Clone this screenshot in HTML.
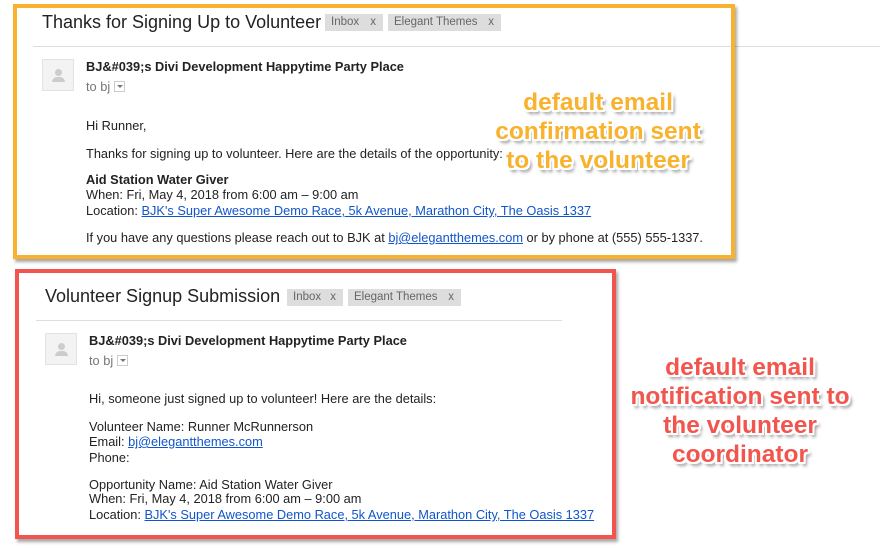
<!DOCTYPE html>
<html><head><meta charset="utf-8"><style>
*{margin:0;padding:0;box-sizing:border-box}
body{width:880px;height:548px;background:#fff;position:relative;overflow:hidden;font-family:"Liberation Sans",Arial,sans-serif;color:#222}
.a{position:absolute;white-space:nowrap;font-size:12.8px;line-height:16px}
.box{position:absolute}
.t{position:absolute;font-size:18px;line-height:22px;color:#222;white-space:nowrap}
.tag{position:absolute;background:#ddd;color:#666;font-size:11.5px;line-height:17px;height:17px;padding-left:6px}
.tag span{position:absolute;right:7px}
.av{position:absolute;width:32px;height:32px;background:#f3f3f3;border:1px solid #e3e3e3}
.av:before{content:"";position:absolute;left:12px;top:9px;width:7px;height:7px;border-radius:50%;background:#ccc}
.av:after{content:"";position:absolute;left:9px;top:17px;width:13px;height:5px;border-radius:5px 5px 0 0;background:#ccc}
.dd{display:inline-block;width:11px;height:11px;border:1px solid #ccc;vertical-align:-1px;margin-left:4px;position:relative}
.dd:after{content:"";position:absolute;left:2px;top:3px;border:3px solid transparent;border-top:3px solid #777}
a{color:#15c;text-decoration:underline}
.b{font-weight:bold}
.ann{position:absolute;font-weight:bold;line-height:29px;text-align:center;white-space:nowrap;letter-spacing:0;
text-shadow:2px 0 0 #fff,-2px 0 0 #fff,0 2px 0 #fff,0 -2px 0 #fff,2px 2px 0 #fff,-2px -2px 0 #fff,2px -2px 0 #fff,-2px 2px 0 #fff,3px 4px 3px rgba(0,0,0,.45)}
</style></head><body>
<div class="box" style="left:33px;top:46px;width:847px;height:1px;background:#ddd"></div>
<div class="box" style="left:13px;top:4px;width:722px;height:255px;border:4px solid #f8b22d;box-shadow:2px 3px 3px rgba(0,0,0,.35)"></div>
<div class="t" style="left:42px;top:11px">Thanks for Signing Up to Volunteer</div>
<div class="tag" style="left:325px;top:14px;width:58px">Inbox<span>x</span></div>
<div class="tag" style="left:388px;top:14px;width:113px">Elegant Themes<span>x</span></div>
<div class="av" style="left:42px;top:59px"></div>
<div class="a b" style="left:86px;top:59px">BJ&amp;#039;s Divi Development Happytime Party Place</div>
<div class="a" style="left:86px;top:79px;color:#777">to bj<span class="dd"></span></div>
<div class="a" style="left:86px;top:118px">Hi Runner,</div>
<div class="a" style="left:86px;top:146px">Thanks for signing up to volunteer. Here are the details of the opportunity:</div>
<div class="a b" style="left:86px;top:172px">Aid Station Water Giver</div>
<div class="a" style="left:86px;top:187px">When: Fri, May 4, 2018 from 6:00 am – 9:00 am</div>
<div class="a" style="left:86px;top:203px">Location: <a>BJK's Super Awesome Demo Race, 5k Avenue, Marathon City, The Oasis 1337</a></div>
<div class="a" style="left:86px;top:230px">If you have any questions please reach out to BJK at <a>bj@elegantthemes.com</a> or by phone at (555) 555-1337.</div>
<div class="ann" style="left:468px;top:88px;width:260px;color:#f8b22d;font-size:24.5px">default email<br>confirmation sent<br>to the volunteer</div>

<div class="box" style="left:15px;top:269px;width:601px;height:270px;border:4px solid #f2554d;box-shadow:2px 3px 3px rgba(0,0,0,.35)"></div>
<div class="t" style="left:45px;top:285px">Volunteer Signup Submission</div>
<div class="tag" style="left:287px;top:289px;width:56px">Inbox<span>x</span></div>
<div class="tag" style="left:348px;top:289px;width:113px">Elegant Themes<span>x</span></div>
<div class="box" style="left:36px;top:320px;width:526px;height:1px;background:#ddd"></div>
<div class="av" style="left:45px;top:333px"></div>
<div class="a b" style="left:89px;top:333px">BJ&amp;#039;s Divi Development Happytime Party Place</div>
<div class="a" style="left:89px;top:353px;color:#777">to bj<span class="dd"></span></div>
<div class="a" style="left:89px;top:391px">Hi, someone just signed up to volunteer! Here are the details:</div>
<div class="a" style="left:89px;top:419px">Volunteer Name: Runner McRunnerson</div>
<div class="a" style="left:89px;top:434px">Email: <a>bj@elegantthemes.com</a></div>
<div class="a" style="left:89px;top:450px">Phone:</div>
<div class="a" style="left:89px;top:477px">Opportunity Name: Aid Station Water Giver</div>
<div class="a" style="left:89px;top:491px">When: Fri, May 4, 2018 from 6:00 am – 9:00 am</div>
<div class="a" style="left:89px;top:507px">Location: <a>BJK's Super Awesome Demo Race, 5k Avenue, Marathon City, The Oasis 1337</a></div>
<div class="ann" style="left:605px;top:353px;width:270px;color:#f2554d;font-size:24.5px">default email<br>notification sent to<br>the volunteer<br>coordinator</div>
</body></html>
